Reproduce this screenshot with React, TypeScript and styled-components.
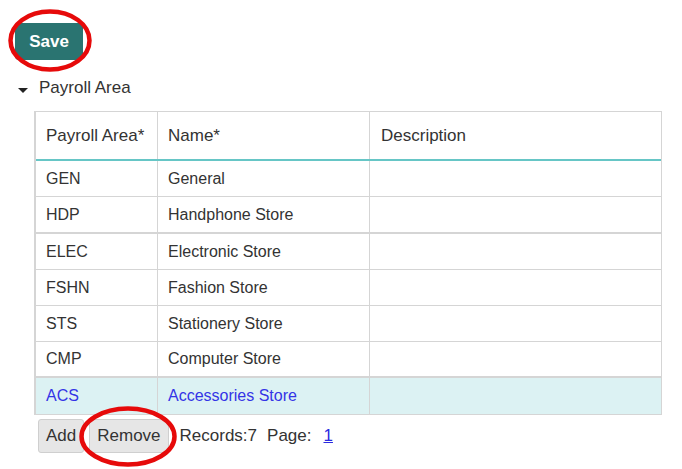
import React from "react";
import styled, { createGlobalStyle } from "styled-components";

const GlobalStyle = createGlobalStyle`
  html, body { margin: 0; padding: 0; background: #ffffff; }
  body { font-family: "Liberation Sans", Arial, sans-serif; color: #333333; }
  * { box-sizing: border-box; }
`;

const Page = styled.div`
  position: relative;
  width: 682px;
  height: 469px;
  padding-top: 23px;
  overflow: hidden;
`;

const Toolbar = styled.div`
  display: flex;
  padding-left: 15px;
`;

const SaveButton = styled.button`
  width: 68px;
  height: 37px;
  border: none;
  border-radius: 4px;
  background: #2a7471;
  color: #ffffff;
  font-family: inherit;
  font-size: 17px;
  font-weight: bold;
  padding: 0;
`;

const SectionHeader = styled.div`
  display: flex;
  align-items: center;
  gap: 11px;
  height: 24px;
  margin-top: 16px;
  padding-left: 18px;
  font-size: 17px;
  color: #333333;
`;

const Caret = styled.span`
  width: 0;
  height: 0;
  margin-top: 4px;
  border-left: 5.5px solid transparent;
  border-right: 5.5px solid transparent;
  border-top: 5px solid #222222;
`;

const Table = styled.div`
  display: flex;
  flex-direction: column;
  width: 628px;
  margin: 11px 0 0 34px;
  border: 1px solid #d5d5d5;
  border-left-width: 2px;
`;

const Row = styled.div<{ $head?: boolean; $thick?: boolean; $tall?: boolean; $selected?: boolean; $last?: boolean }>`
  display: grid;
  grid-template-columns: 122px 212px 1fr;
  height: ${(p) => (p.$head ? 49 : p.$tall ? 37 : 36)}px;
  background: ${(p) => (p.$selected ? "#dcf2f3" : "#ffffff")};
  color: ${(p) => (p.$selected ? "#3434e6" : "#333333")};
  font-size: ${(p) => (p.$head ? 17 : 16)}px;
  border-bottom: ${(p) =>
    p.$head ? "2px solid #66c6c6" : p.$last ? "none" : p.$thick ? "2px solid #d5d5d5" : "1px solid #d5d5d5"};
`;

const Cell = styled.div`
  display: flex;
  align-items: center;
  padding-left: 10px;
  border-right: 1px solid #d5d5d5;
  white-space: nowrap;
  &:last-child { border-right: none; padding-left: 11px; }
`;

const Footer = styled.div`
  display: flex;
  align-items: center;
  margin-top: 4px;
  padding-left: 38px;
  font-size: 17px;
  color: #333333;
`;

const GrayButton = styled.button`
  height: 34px;
  padding: 0 7px;
  margin-right: 5px;
  border: 1px solid #cfcfcf;
  border-radius: 3px;
  background: #e6e6e6;
  color: #333333;
  font-family: inherit;
  font-size: 17px;
`;

const Info = styled.span<{ $gap: number }>`
  margin-left: ${(p) => p.$gap}px;
`;

const PageLink = styled.a`
  margin-left: 12px;
  color: #2a2ae0;
  text-decoration: underline;
`;

const Annotations = styled.svg`
  position: absolute;
  left: 0;
  top: 0;
  pointer-events: none;
`;

const rows = [
  { code: "GEN", name: "General" },
  { code: "HDP", name: "Handphone Store", thick: true, tall: true },
  { code: "ELEC", name: "Electronic Store" },
  { code: "FSHN", name: "Fashion Store" },
  { code: "STS", name: "Stationery Store" },
  { code: "CMP", name: "Computer Store", thick: true },
  { code: "ACS", name: "Accessories Store", selected: true },
];

export default function App() {
  return (
    <>
      <GlobalStyle />
      <Page>
        <Toolbar>
          <SaveButton>Save</SaveButton>
        </Toolbar>
        <SectionHeader>
          <Caret />
          <span>Payroll Area</span>
        </SectionHeader>
        <Table>
          <Row $head>
            <Cell>Payroll Area*</Cell>
            <Cell>Name*</Cell>
            <Cell>Description</Cell>
          </Row>
          {rows.map((r, i) => (
            <Row
              key={r.code}
              $thick={r.thick}
              $tall={r.tall}
              $selected={r.selected}
              $last={i === rows.length - 1}
            >
              <Cell>{r.code}</Cell>
              <Cell>{r.name}</Cell>
              <Cell />
            </Row>
          ))}
        </Table>
        <Footer>
          <GrayButton>Add</GrayButton>
          <GrayButton>Remove</GrayButton>
          <Info $gap={6}>Records:7</Info>
          <Info $gap={10}>Page:</Info>
          <PageLink href="#">1</PageLink>
        </Footer>
        <Annotations width="682" height="469" viewBox="0 0 682 469">
          <ellipse cx="50" cy="40.5" rx="39.5" ry="29" fill="none" stroke="#e60a0a" strokeWidth="4.5" />
          <ellipse cx="128" cy="436.5" rx="46.5" ry="28" fill="none" stroke="#e60a0a" strokeWidth="4.5" />
        </Annotations>
      </Page>
    </>
  );
}
